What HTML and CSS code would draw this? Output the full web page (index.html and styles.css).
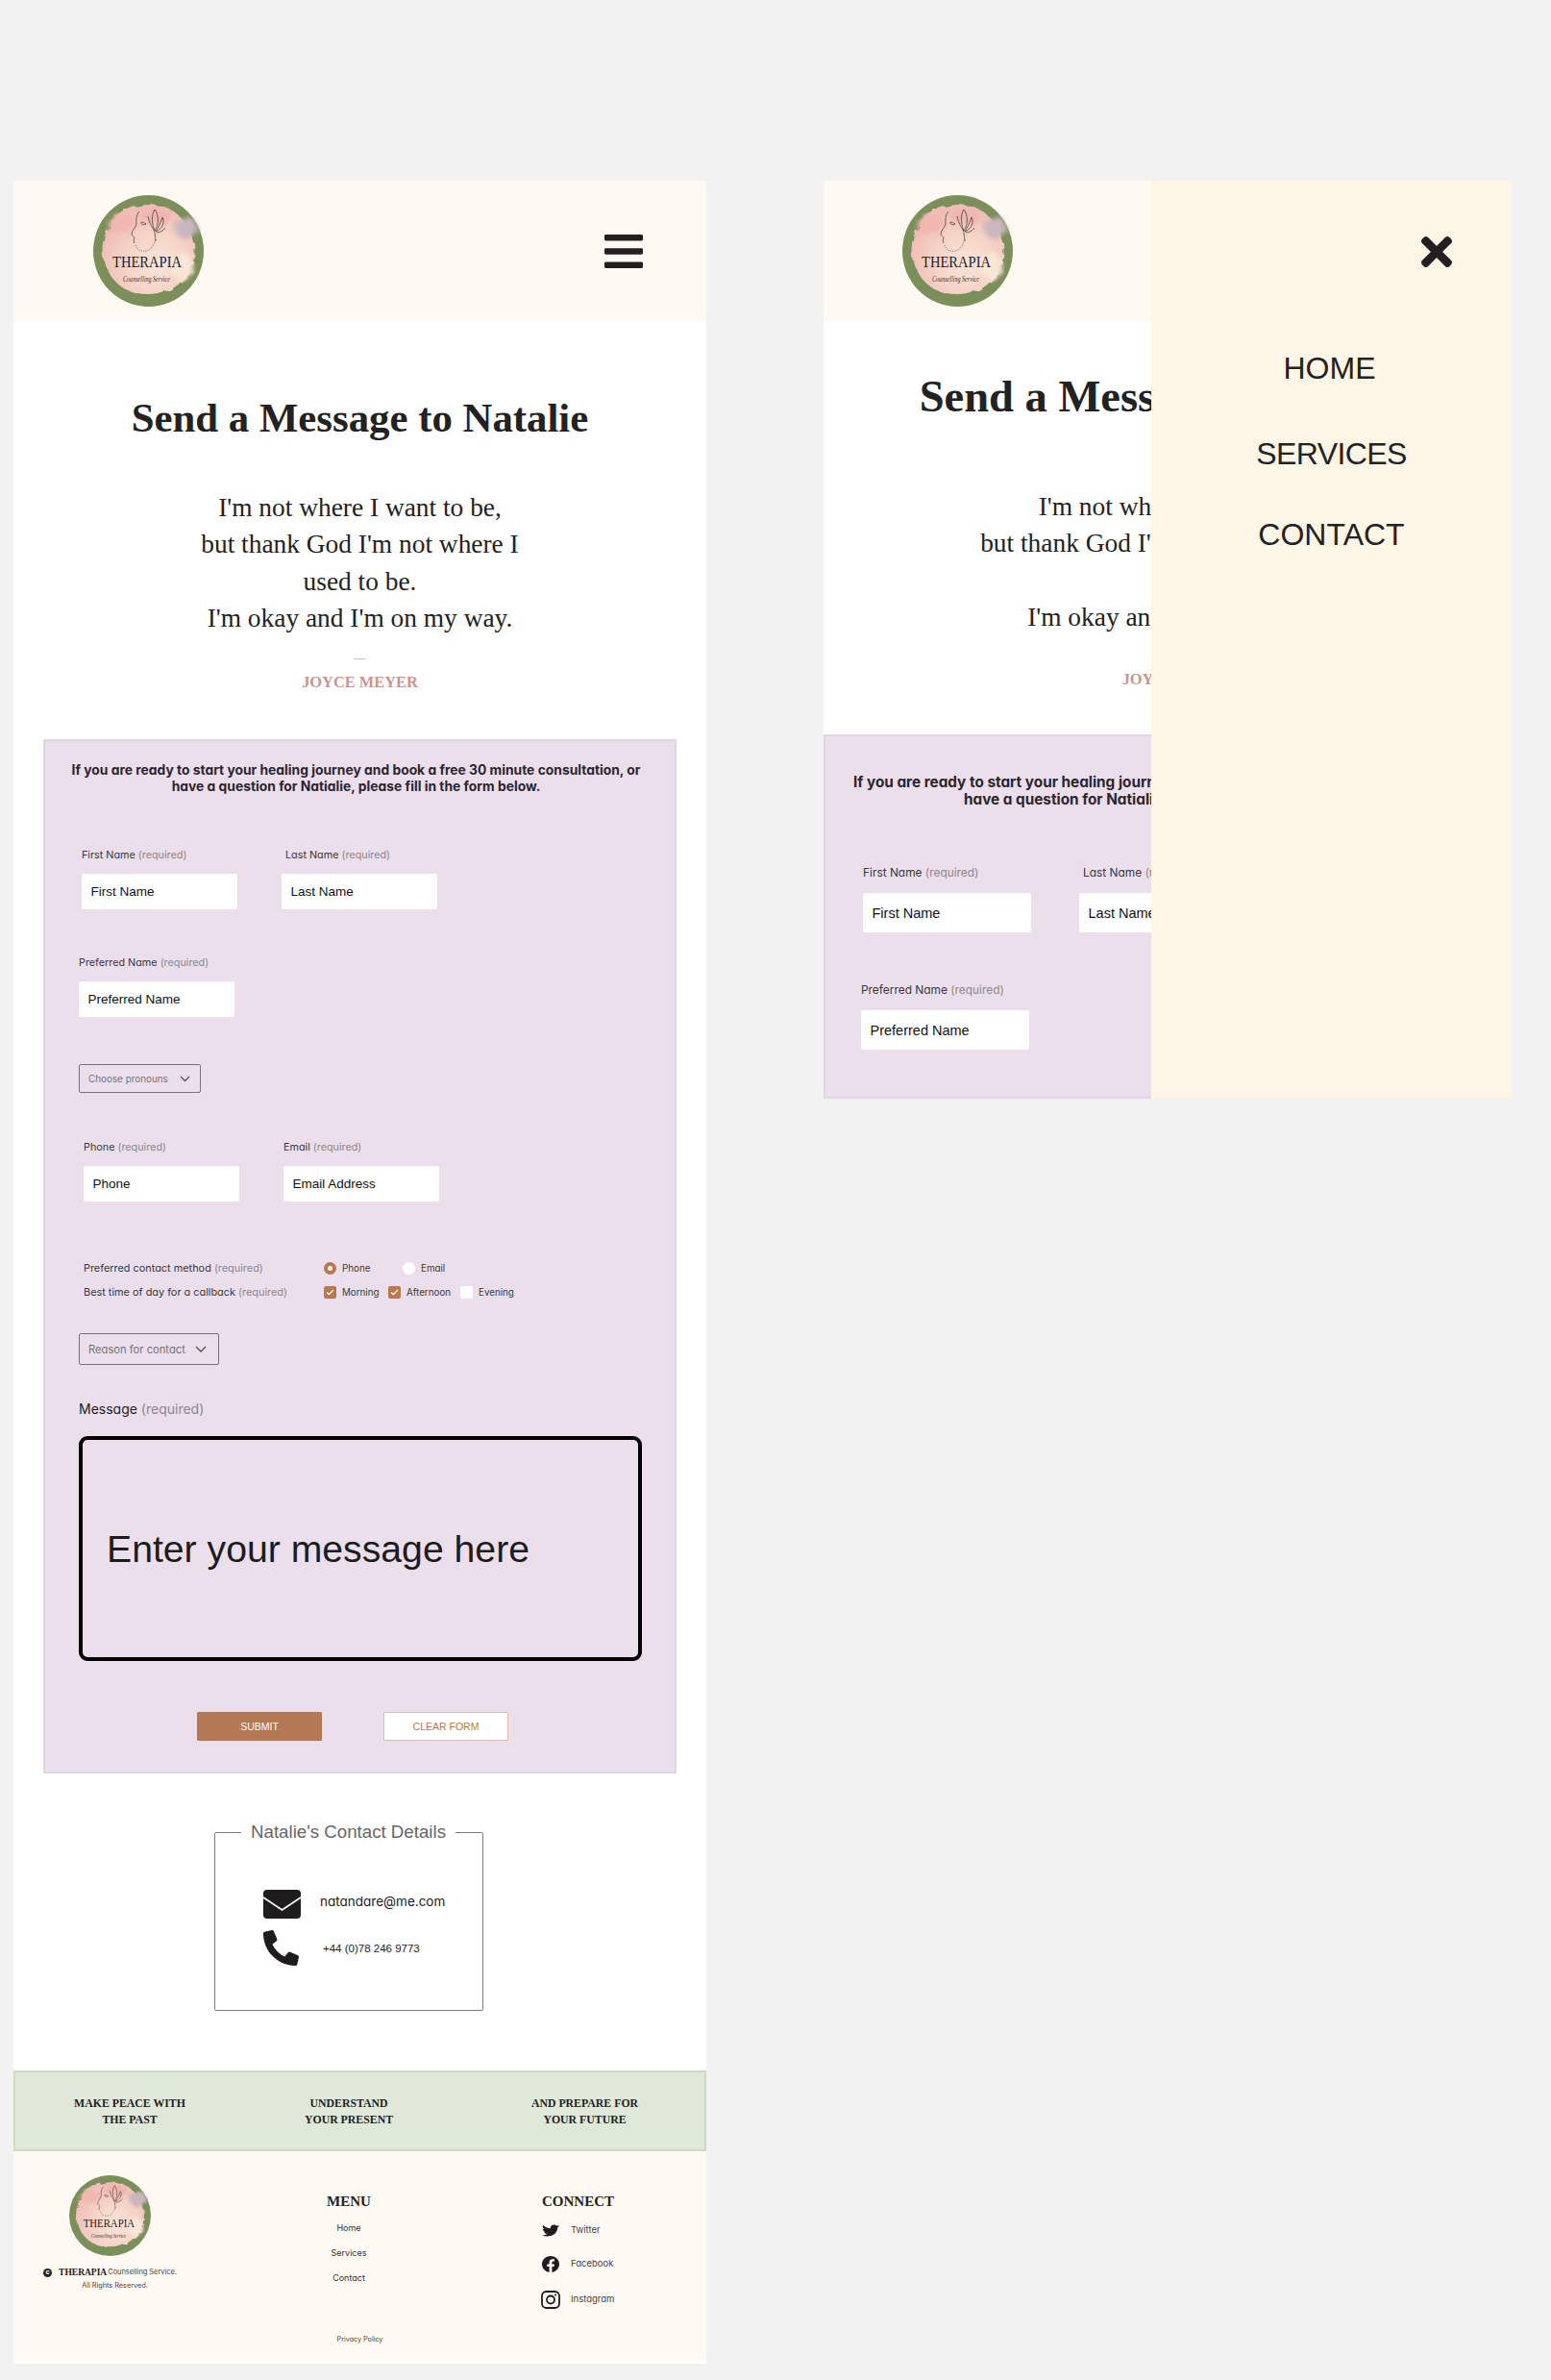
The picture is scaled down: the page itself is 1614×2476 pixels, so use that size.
FILE: index.html
```html
<!DOCTYPE html>
<html>
<head>
    <title>Therapia - Send a Message</title>
    <link rel="stylesheet" href="styles.css">
</head>
<body>
    <!-- shared drawings -->
    <svg class="defs" width="0" height="0">
        <defs>
            <radialGradient id="wash" cx="58%" cy="64%" r="62%">
                <stop offset="0" stop-color="#f9e6da"/>
                <stop offset="0.5" stop-color="#f6d5c8"/>
                <stop offset="1" stop-color="#efbdb6"/>
            </radialGradient>
            <filter id="soft"><feGaussianBlur stdDeviation="2.5"/></filter>
            <filter id="rough" x="-10%" y="-10%" width="120%" height="120%">
                <feTurbulence type="fractalNoise" baseFrequency="0.09" numOctaves="2" seed="4"/>
                <feDisplacementMap in="SourceGraphic" scale="7"/>
            </filter>
            <symbol id="logo" viewBox="0 0 115 116" preserveAspectRatio="none">
                <ellipse cx="57.5" cy="58" rx="57.5" ry="58" fill="#7b8f5b"/>
                <g filter="url(#rough)">
                    <ellipse cx="57.5" cy="57" rx="48" ry="47" fill="url(#wash)"/>
                    <ellipse cx="97" cy="34" rx="12" ry="11" fill="#c9b6bf" filter="url(#soft)"/>
                    <ellipse cx="92" cy="74" rx="11" ry="14" fill="#f9e6d6" filter="url(#soft)"/>
                    <ellipse cx="30" cy="30" rx="15" ry="10" fill="#f0b8b0" filter="url(#soft)"/>
                    <ellipse cx="66" cy="22" rx="16" ry="8" fill="#efb6ae" filter="url(#soft)"/>
                </g>
                <g class="logo-line">
                    <path d="M48 17C44 21 45 27 45 30C44 34 40 37 40 40C40 43 43 43 43 45C42 47 42 49 43 50"/>
                    <path class="logo-dots" d="M44 52C45 55 47 58 51 58C55 59 59 57 61 54C63 51 64 49 65 46"/>
                    <path d="M50 28C49 30 52 32 55 30C53 29 52 28 50 28"/>
                    <path d="M64 37C61 30 60 21 64 15C68 20 69 30 64 37Z"/>
                    <path d="M65 38C68 33 70 29 72 23C75 28 72 35 65 38Z"/>
                    <path d="M66 39C69 39 73 37 75 34"/>
                    <path d="M57 22C58 28 61 33 64 38C64 42 65 45 65 48"/>
                </g>
                <text class="logo-name" x="20" y="75" textLength="72" lengthAdjust="spacingAndGlyphs">THERAPIA</text>
                <text class="logo-sub" x="31" y="90" textLength="49" lengthAdjust="spacingAndGlyphs">Counselling Service</text>
            </symbol>
        </defs>
    </svg>

    <!-- closed menu, full page -->
    <div class="frame">
        <header class="top-bar">
            <svg class="logo" width="115" height="116"><use href="#logo"/></svg>
            <svg class="burger" viewBox="0 60 448 392" width="40" height="35"><path d="M16 132h416c8.837 0 16-7.163 16-16V76c0-8.837-7.163-16-16-16H16C7.163 60 0 67.163 0 76v40c0 8.837 7.163 16 16 16zm0 160h416c8.837 0 16-7.163 16-16v-40c0-8.837-7.163-16-16-16H16c-8.837 0-16 7.163-16 16v40c0 8.837 7.163 16 16 16zm0 160h416c8.837 0 16-7.163 16-16v-40c0-8.837-7.163-16-16-16H16c-8.837 0-16 7.163-16 16v40c0 8.837 7.163 16 16 16z"/></svg>
        </header>

        <h1 class="title">Send a Message to Natalie</h1>
        <p class="quote">I'm not where I want to be,<br>but thank God I'm not where I<br>used to be.<br>I'm okay and I'm on my way.</p>
        <p class="dashes">---</p>
        <p class="author">JOYCE MEYER</p>

        <form class="contact-form">
            <p class="intro">If you are ready to start your healing journey and book a free 30 minute consultation, or<br>have a question for Natialie, please fill in the form below.</p>

            <div class="row row-names">
                <div class="field">
                    <label>First Name <span class="req">(required)</span></label>
                    <input class="text-input" placeholder="First Name">
                </div>
                <div class="field field-shift">
                    <label>Last Name <span class="req">(required)</span></label>
                    <input class="text-input" placeholder="Last Name">
                </div>
            </div>

            <div class="row row-preferred">
                <div class="field">
                    <label>Preferred Name <span class="req">(required)</span></label>
                    <input class="text-input" placeholder="Preferred Name">
                </div>
            </div>

            <div class="select select-pronouns">
                <span>Choose pronouns</span>
                <svg width="11" height="7" viewBox="0 0 11 7"><path d="M1 1l4.5 4.5L10 1"/></svg>
            </div>

            <div class="row row-phone">
                <div class="field">
                    <label>Phone <span class="req">(required)</span></label>
                    <input class="text-input" placeholder="Phone">
                </div>
                <div class="field">
                    <label>Email <span class="req">(required)</span></label>
                    <input class="text-input" placeholder="Email Address">
                </div>
            </div>

            <div class="option-row option-row-first">
                <span class="option-label">Preferred contact method <span class="req">(required)</span></span>
                <span class="radio radio-on"></span><span class="choice choice-phone">Phone</span>
                <span class="radio"></span><span class="choice">Email</span>
            </div>
            <div class="option-row">
                <span class="option-label">Best time of day for a callback <span class="req">(required)</span></span>
                <span class="check check-on"><svg width="9" height="7" viewBox="0 0 9 7"><path d="M1 3.5l2.3 2.2L8 1"/></svg></span><span class="choice choice-morning">Morning</span>
                <span class="check check-on"><svg width="9" height="7" viewBox="0 0 9 7"><path d="M1 3.5l2.3 2.2L8 1"/></svg></span><span class="choice choice-afternoon">Afternoon</span>
                <span class="check"></span><span class="choice">Evening</span>
            </div>

            <div class="select select-reason">
                <span>Reason for contact</span>
                <svg width="12" height="8" viewBox="0 0 12 8"><path d="M1 1l5 5 5-5"/></svg>
            </div>

            <label class="message-label">Message <span class="req">(required)</span></label>
            <textarea class="message" placeholder="Enter your message here"></textarea>

            <div class="buttons">
                <button type="button" class="btn btn-submit">SUBMIT</button>
                <button type="button" class="btn btn-clear">CLEAR FORM</button>
            </div>
        </form>

        <fieldset class="details">
            <legend>Natalie's Contact Details</legend>
            <div class="detail-row">
                <svg class="mail-icon" width="39" height="30" viewBox="0 0 39 30"><rect width="39" height="30" rx="4"/><path d="M0 8l19.5 13L39 8"/></svg>
                <span class="detail-mail">natandare@me.com</span>
            </div>
            <div class="detail-row detail-row-phone">
                <svg class="phone-icon" width="37" height="37" viewBox="0 0 512 512"><path transform="translate(512 0) scale(-1 1)" d="M493.4 24.6l-104-24c-11.3-2.6-22.9 3.3-27.5 13.9l-48 112c-4.2 9.8-1.4 21.3 6.9 28l60.6 49.6c-36 76.7-98.9 140.5-177.2 177.2l-49.6-60.6c-6.8-8.3-18.2-11.1-28-6.9l-112 48C3.9 366.5-2 378.1.6 389.4l24 104C27.1 504.2 36.7 512 48 512c256.1 0 464-207.5 464-464 0-11.2-7.7-20.9-18.6-23.4z"/></svg>
                <span class="detail-phone">+44 (0)78 246 9773</span>
            </div>
        </fieldset>

        <section class="band">
            <p class="band-item">MAKE PEACE WITH<br>THE PAST</p>
            <p class="band-item">UNDERSTAND<br>YOUR PRESENT</p>
            <p class="band-item band-last">AND PREPARE FOR<br>YOUR FUTURE</p>
        </section>

        <footer class="site-footer">
            <div class="footer-grid">
                <div class="footer-brand">
                    <svg class="footer-logo" width="85" height="84"><use href="#logo"/></svg>
                    <p class="copy"><span class="copy-mark">c</span><b>THERAPIA</b> Counselling Service.</p>
                    <p class="rights">All Rights Reserved.</p>
                </div>
                <div class="footer-menu">
                    <h4>MENU</h4>
                    <a>Home</a>
                    <a>Services</a>
                    <a>Contact</a>
                </div>
                <div class="footer-connect">
                    <h4>CONNECT</h4>
                    <div class="social">
                        <svg width="18" height="15" viewBox="0 0 512 512" preserveAspectRatio="none"><path d="M459.37 151.716c.325 4.548.325 9.097.325 13.645 0 138.72-105.583 298.558-298.558 298.558-59.452 0-114.68-17.219-161.137-47.106 8.447.974 16.568 1.299 25.34 1.299 49.055 0 94.213-16.568 130.274-44.832-46.132-.975-84.792-31.188-98.112-72.772 6.498.974 12.995 1.624 19.818 1.624 9.421 0 18.843-1.3 27.614-3.573-48.081-9.747-84.143-51.98-84.143-102.985v-1.299c13.969 7.797 30.214 12.67 47.431 13.319-28.264-18.843-46.781-51.005-46.781-87.391 0-19.492 5.197-37.36 14.294-52.954 51.655 63.675 129.3 105.258 216.365 109.807-1.624-7.797-2.599-15.918-2.599-24.04 0-57.828 46.782-104.934 104.934-104.934 30.213 0 57.502 12.67 76.67 33.137 23.715-4.548 46.456-13.32 66.599-25.34-7.798 24.366-24.366 44.833-46.132 57.827 21.117-2.273 41.584-8.122 60.426-16.243-14.292 20.791-32.161 39.308-52.628 54.253z"/></svg>
                        <span>Twitter</span>
                    </div>
                    <div class="social">
                        <svg width="18" height="17" viewBox="8 8 496 496" preserveAspectRatio="none"><path d="M504 256C504 119 393 8 256 8S8 119 8 256c0 123.78 90.69 226.38 209.25 245V327.69h-63V256h63v-54.64c0-62.15 37-96.48 93.67-96.48 27.14 0 55.52 4.84 55.52 4.84v61h-31.28c-30.8 0-40.41 19.12-40.41 38.73V256h68.78l-11 71.69h-57.78V501C413.31 482.38 504 379.78 504 256z"/></svg>
                        <span>Facebook</span>
                    </div>
                    <div class="social social-insta">
                        <svg class="insta" width="20" height="19" viewBox="0 0 20 19"><rect x="1" y="1" width="18" height="17" rx="4.5"/><circle cx="10" cy="9.5" r="4"/><circle class="insta-dot" cx="15" cy="4.5" r="1.1"/></svg>
                        <span>Instagram</span>
                    </div>
                </div>
            </div>
            <p class="privacy">Privacy Policy</p>
        </footer>
    </div>

    <!-- open menu, first part of the page -->
    <div class="frame frame-open">
        <header class="top-bar top-bar-open">
            <svg class="logo" width="115" height="116"><use href="#logo"/></svg>
        </header>

        <h1 class="title">Send a Message to Natalie</h1>
        <p class="quote">I'm not where I want to be,<br>but thank God I'm not where I used to<br>be.<br>I'm okay and I'm on my way.</p>
        <p class="dashes">---</p>
        <p class="author">JOYCE MEYER</p>

        <form class="contact-form">
            <p class="intro">If you are ready to start your healing journey and book a free 30 minute consultation, or<br>have a question for Natialie, please fill in the form below.</p>

            <div class="row row-names">
                <div class="field">
                    <label>First Name <span class="req">(required)</span></label>
                    <input class="text-input" placeholder="First Name">
                </div>
                <div class="field field-shift">
                    <label>Last Name <span class="req">(required)</span></label>
                    <input class="text-input" placeholder="Last Name">
                </div>
            </div>

            <div class="row row-preferred">
                <div class="field">
                    <label>Preferred Name <span class="req">(required)</span></label>
                    <input class="text-input" placeholder="Preferred Name">
                </div>
            </div>
        </form>

        <aside class="drawer">
            <svg class="close" viewBox="0 80 352 352" width="32" height="32"><path d="M242.72 256l100.07-100.07c12.28-12.28 12.28-32.19 0-44.48l-22.24-22.24c-12.28-12.28-32.19-12.28-44.48 0L176 189.28 75.93 89.21c-12.28-12.28-32.19-12.28-44.48 0L9.21 111.45c-12.28 12.28-12.28 32.19 0 44.48L109.28 256 9.21 356.07c-12.28 12.28-12.28 32.19 0 44.48l22.24 22.24c12.28 12.28 32.2 12.28 44.48 0L176 322.72l100.07 100.07c12.28 12.28 32.2 12.28 44.48 0l22.24-22.24c12.28-12.28 12.28-32.19 0-44.48L242.72 256z"/></svg>
            <nav class="drawer-nav">
                <a class="nav-home">HOME</a>
                <a class="nav-services">SERVICES</a>
                <a class="nav-contact">CONTACT</a>
            </nav>
        </aside>
    </div>
</body>
</html>
```

FILE: styles.css
```css
body {
    margin: 0;
    height: 2476px;
    box-sizing: border-box;
    padding: 188px 0 0 14px;
    display: flex;
    align-items: flex-start;
    gap: 122px;
    overflow: hidden;
    background-color: #f2f2f2;
    color: #222;
    font-family: Inter, "Liberation Sans", sans-serif;
    font-feature-settings: "cv11";
}
p, h1, h4 {
    margin: 0;
}
.defs {
    position: absolute;
}
.frame {
    width: 721px;
    height: 2271px;
    flex: none;
    background-color: #fff;
}
.frame-open {
    position: relative;
    width: 716px;
    height: 955px;
    overflow: hidden;
}

/* logo */
.logo-line {
    fill: none;
    stroke: #1e1618;
    stroke-width: 0.6;
}
.logo-dots {
    stroke-dasharray: 1 1.2;
}
.logo-name {
    font-family: "Liberation Serif", serif;
    font-size: 16px;
    fill: #2a2022;
}
.logo-sub {
    font-family: "Liberation Serif", serif;
    font-style: italic;
    font-size: 8px;
    fill: #40302f;
}

/* top bar */
.top-bar {
    height: 147px;
    box-sizing: border-box;
    padding: 15px 66px 0 83px;
    display: flex;
    justify-content: space-between;
    align-items: flex-start;
    background-color: #fef9f3;
}
.top-bar-open {
    height: 146px;
    padding-left: 82px;
}
.burger {
    margin-top: 41px;
    fill: #231f20;
}

/* heading and quote */
.title {
    margin-top: 74px;
    font-family: "Liberation Serif", serif;
    font-size: 42.8px;
    line-height: 52px;
    font-weight: bold;
    text-align: center;
    color: #222;
}
.quote {
    margin-top: 48px;
    font-family: "Liberation Serif", serif;
    font-size: 27.4px;
    line-height: 38.3px;
    text-align: center;
    color: #222;
}
.dashes {
    margin-top: 16px;
    font-family: "Liberation Serif", serif;
    font-size: 12px;
    line-height: 14px;
    text-align: center;
    color: #d9a3a3;
}
.author {
    margin-top: 8px;
    font-family: "Liberation Serif", serif;
    font-size: 16.4px;
    line-height: 20px;
    font-weight: bold;
    text-align: center;
    color: #c99494;
}

/* form */
.contact-form {
    margin: 49px 31px 0;
    height: 1076px;
    box-sizing: border-box;
    border: 2px solid #e4d5e4;
    background-color: #ebdfeb;
    padding-top: 22px;
}
.intro {
    padding-right: 8px;
    font-size: 13.85px;
    line-height: 17px;
    font-weight: 700;
    text-align: center;
    color: #2c2530;
}
.row {
    display: flex;
}
.row-names {
    margin: 57px 0 0 38px;
    gap: 46px;
}
.row-preferred {
    margin: 50px 0 0 35px;
}
.row-phone {
    margin: 51px 0 0 40px;
    gap: 46px;
}
.field label {
    display: block;
    margin-bottom: 13px;
    font-size: 10.8px;
    line-height: 12px;
    color: #3c3640;
}
.field-shift label {
    padding-left: 4px;
}
.req {
    color: #8c8690;
}
.text-input {
    display: block;
    width: 162px;
    height: 37px;
    box-sizing: border-box;
    padding: 0 9.5px;
    border: 0;
    border-radius: 2px;
    background-color: #fff;
    font-family: "Liberation Sans", sans-serif;
    font-size: 13.5px;
}
.text-input::placeholder {
    color: #111;
    opacity: 1;
}
.select {
    display: flex;
    align-items: center;
    justify-content: space-between;
    box-sizing: border-box;
    border: 1.5px solid #77727c;
    border-radius: 2px;
    color: #77727c;
    margin-left: 35px;
}
.select svg {
    fill: none;
    stroke: #55505a;
    stroke-width: 1.3;
}
.select-pronouns {
    width: 127px;
    height: 30px;
    margin-top: 49px;
    padding: 0 10px 0 9px;
    font-size: 9.9px;
}
.select-reason {
    width: 146px;
    height: 33px;
    margin-top: 36px;
    padding: 0 12px 0 9px;
    font-size: 11.2px;
}
.option-row {
    display: flex;
    align-items: center;
    height: 14px;
    margin: 11px 0 0 40px;
    font-size: 10.9px;
    color: #3c3640;
}
.option-row-first {
    margin-top: 62px;
}
.option-label {
    width: 250px;
}
.choice {
    margin-left: 6px;
    font-size: 9.8px;
}
.choice-phone {
    width: 63px;
}
.choice-morning {
    width: 48px;
}
.choice-afternoon {
    width: 56px;
}
.radio, .check {
    width: 13px;
    height: 13px;
    flex: none;
    box-sizing: border-box;
    display: flex;
    align-items: center;
    justify-content: center;
    background-color: #fff;
}
.radio {
    border-radius: 50%;
}
.radio-on {
    border: 4px solid #b87850;
}
.check {
    border-radius: 2px;
}
.check-on {
    background-color: #b87850;
}
.check svg {
    fill: none;
    stroke: #fff;
    stroke-width: 1.3;
}
.message-label {
    display: block;
    margin: 37px 0 0 35px;
    font-size: 14px;
    line-height: 18px;
    color: #222;
}
.message {
    display: block;
    width: 586px;
    height: 234px;
    box-sizing: border-box;
    margin: 19px 0 0 35px;
    padding: 91px 0 0 25px;
    border: 4.5px solid #000;
    border-radius: 9px;
    background: transparent;
    resize: none;
    font-family: "Liberation Sans", sans-serif;
    font-size: 39.2px;
    line-height: 46px;
}
.message::placeholder {
    color: #1c1c1c;
    opacity: 1;
}
.buttons {
    display: flex;
    gap: 64px;
    margin: 53px 0 0 158px;
}
.btn {
    width: 130px;
    height: 30px;
    padding: 0;
    border-radius: 1px;
    font-family: "Liberation Sans", sans-serif;
    font-size: 10.5px;
}
.btn-submit {
    border: 0;
    background-color: #b47854;
    color: #fff;
}
.btn-clear {
    border: 1px solid #e3bcae;
    background-color: #fff;
    color: #b87850;
}

/* contact details */
.details {
    width: 280px;
    height: 197px;
    box-sizing: border-box;
    margin: 50px 0 0 209px;
    padding: 49px 0 0;
    border: 1.5px solid #7c7c7c;
    border-radius: 2px;
}
.details legend {
    margin-left: 27px;
    padding: 0 10px;
    white-space: nowrap;
    font-family: "Liberation Sans", sans-serif;
    font-size: 18.7px;
    line-height: 22px;
    color: #666;
}
.detail-row {
    display: flex;
    align-items: center;
    gap: 20px;
    margin-left: 50px;
}
.detail-row-phone {
    margin-top: 12px;
    gap: 25px;
}
.mail-icon rect {
    fill: #1f1c1d;
}
.mail-icon path {
    fill: none;
    stroke: #fff;
    stroke-width: 1.8;
}
.phone-icon {
    fill: #1f1c1d;
}
.detail-mail {
    font-size: 13.5px;
    margin-bottom: 7px;
}
.detail-phone {
    font-family: "Liberation Sans", sans-serif;
    font-size: 11.5px;
}

/* green band */
.band {
    margin-top: 62px;
    height: 84px;
    box-sizing: border-box;
    padding-top: 2px;
    border: 2px solid #cedbc4;
    background-color: #e0e8d9;
    display: grid;
    grid-template-columns: 238px 218px 1fr;
    align-items: center;
}
.band-item {
    font-family: "Liberation Serif", serif;
    font-size: 11.8px;
    line-height: 17px;
    font-weight: bold;
    text-align: center;
    color: #222;
}
.band-last {
    padding-left: 12px;
}

/* footer */
.site-footer {
    height: 217px;
    box-sizing: border-box;
    padding-top: 25px;
    background-color: #fef9f3;
}
.footer-grid {
    height: 166px;
    display: grid;
    grid-template-columns: 201px 296px 1fr;
}
.footer-brand {
    text-align: center;
}
.footer-logo {
    display: block;
    margin-left: 58px;
}
.copy {
    margin-top: 11px;
    font-size: 7.4px;
    line-height: 12px;
    white-space: nowrap;
    display: flex;
    justify-content: center;
    align-items: center;
    gap: 1px;
    color: #4a4547;
}
.copy b {
    font-family: "Liberation Serif", serif;
    font-size: 9.5px;
    color: #222;
}
.copy-mark {
    width: 9px;
    height: 9px;
    margin-right: 6px;
    border-radius: 50%;
    background-color: #222;
    color: #fff;
    font-size: 7px;
    line-height: 8px;
    font-weight: 700;
}
.rights {
    margin-top: 2px;
    padding-left: 10px;
    font-size: 7.3px;
    line-height: 12px;
    color: #4a4547;
}
.footer-menu {
    padding-top: 19px;
    text-align: center;
}
.footer-menu h4, .footer-connect h4 {
    font-family: "Liberation Serif", serif;
    font-size: 15px;
    line-height: 16px;
    color: #222;
}
.footer-menu a {
    display: block;
    margin-top: 14px;
    font-size: 9px;
    line-height: 12px;
    color: #333;
}
.footer-connect {
    padding: 19px 0 0 53px;
}
.social {
    display: flex;
    align-items: center;
    gap: 12px;
    margin-top: 19px;
    font-size: 9.5px;
    color: #444;
}
.footer-connect h4 + .social {
    margin-top: 15px;
}
.social svg {
    fill: #1f1c1d;
    flex: none;
}
.social span {
    margin-bottom: 3px;
}
.social-insta {
    margin-left: -1px;
    gap: 11px;
}
.social .insta {
    fill: none;
    stroke: #1f1c1d;
    stroke-width: 1.8;
}
.social .insta-dot {
    fill: #1f1c1d;
    stroke: none;
}
.privacy {
    font-size: 7.2px;
    line-height: 10px;
    text-align: center;
    color: #444;
}

/* open menu */
.drawer {
    position: absolute;
    top: 0;
    right: 0;
    bottom: 0;
    width: 375px;
    display: flex;
    flex-direction: column;
    background-color: #fdf5e6;
}
.close {
    align-self: flex-end;
    margin: 58px 62px 0 0;
    fill: #231f20;
}
.drawer-nav {
    display: flex;
    flex-direction: column;
    align-items: center;
    margin-top: 86px;
    font-family: "Liberation Sans", sans-serif;
    font-size: 32px;
    line-height: 38px;
    color: #222;
}
.nav-home {
    padding-right: 4px;
}
.nav-services {
    margin-top: 51px;
    letter-spacing: -0.6px;
}
.nav-contact {
    margin-top: 46px;
}

/* the open frame shows the same page a little larger */
.frame-open .title {
    margin-top: 53px;
    font-size: 46.5px;
}
.frame-open .quote {
    margin-top: 69px;
    padding-left: 26px;
}
.frame-open .dashes {
    margin-top: 13px;
    padding-left: 26px;
}
.frame-open .author {
    margin-top: 9px;
    padding-left: 26px;
}
.frame-open .contact-form {
    margin: 47px 0 0;
    height: 379px;
    padding-top: 39px;
}
.frame-open .intro {
    padding-right: 0;
    font-size: 15.3px;
    line-height: 18px;
}
.frame-open .row-names {
    margin: 60px 0 0 39px;
    gap: 50px;
}
.frame-open .row-preferred {
    margin: 53px 0 0 37px;
}
.frame-open .field label {
    font-size: 11.9px;
    line-height: 13px;
    margin-bottom: 15px;
}
.frame-open .text-input {
    width: 175px;
    height: 41px;
    font-size: 14.5px;
}
```
